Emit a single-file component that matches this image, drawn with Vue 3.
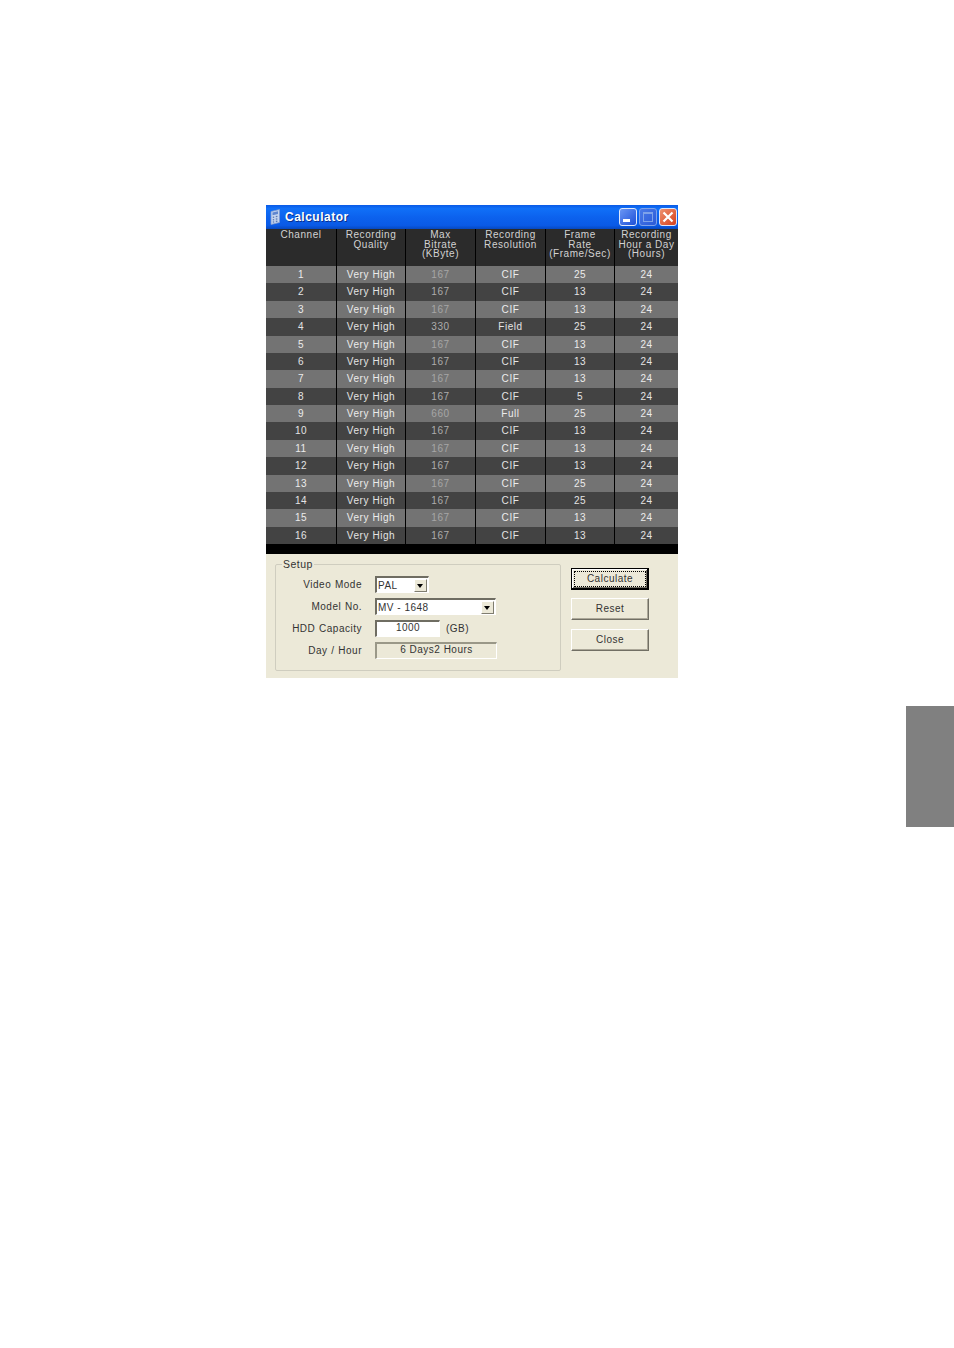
<script setup>
const vals = [
  ['1', '167', 'CIF', '25'], ['2', '167', 'CIF', '13'], ['3', '167', 'CIF', '13'], ['4', '330', 'Field', '25'],
  ['5', '167', 'CIF', '13'], ['6', '167', 'CIF', '13'], ['7', '167', 'CIF', '13'], ['8', '167', 'CIF', '5'],
  ['9', '660', 'Full', '25'], ['10', '167', 'CIF', '13'], ['11', '167', 'CIF', '13'], ['12', '167', 'CIF', '13'],
  ['13', '167', 'CIF', '25'], ['14', '167', 'CIF', '25'], ['15', '167', 'CIF', '13'], ['16', '167', 'CIF', '13'],
]
const rows = vals.map(([ch, rate, res, fps]) => ({ ch, rate, res, fps }))
</script>

<template>
  <div class="page">
    <div class="window">
      <div class="titlebar">
        <svg class="appicon" width="12" height="16" viewBox="0 0 12 16">
          <path d="M1 2.5L9.5 0.5V13.5L1 15.5Z" fill="#c4d4ee" stroke="#7f9bd0" stroke-width="0.8" />
          <path d="M2.5 3.5L8 2.2V5L2.5 6.3Z" fill="#5f86cf" />
          <path d="M2.8 8.4l1.4-.3M5.8 7.7l1.6-.4M2.8 10.9l1.4-.3M5.8 10.2l1.6-.4M2.8 13.2l1.4-.3M5.8 12.5l1.6-.4" stroke="#5a79b6" stroke-width="1.3" />
        </svg>
        <span class="title">Calculator</span>
        <div class="winbtns">
          <span class="wb wb-min"><i class="minbar"></i></span>
          <span class="wb wb-max"><i class="maxbox"></i></span>
          <span class="wb wb-close">
            <svg width="12" height="12" viewBox="0 0 12 12"><path d="M1.5 1.5l9 9M10.5 1.5l-9 9" stroke="#fff" stroke-width="2.2" /></svg>
          </span>
        </div>
      </div>

      <div class="table">
        <div class="row head">
          <div class="cell">Channel</div>
          <div class="cell">Recording<br />Quality</div>
          <div class="cell">Max<br />Bitrate<br />(KByte)</div>
          <div class="cell">Recording<br />Resolution</div>
          <div class="cell">Frame<br />Rate<br />(Frame/Sec)</div>
          <div class="cell">Recording<br />Hour a Day<br />(Hours)</div>
        </div>
        <div v-for="(r, i) in rows" :key="r.ch" class="row body" :class="i % 2 ? 'dark' : 'light'">
          <div class="cell">{{ r.ch }}</div>
          <div class="cell">Very High</div>
          <div class="cell rate">{{ r.rate }}</div>
          <div class="cell">{{ r.res }}</div>
          <div class="cell">{{ r.fps }}</div>
          <div class="cell">24</div>
        </div>
        <div class="tableend"></div>
      </div>

      <div class="bottom">
        <fieldset class="setup">
          <legend>Setup</legend>
          <div class="form">
            <span class="lbl">Video Mode</span>
            <div class="combo combo-s"><span>PAL</span><i class="arrow"></i></div>
            <span class="lbl">Model No.</span>
            <div class="combo combo-l"><span>MV - 1648</span><i class="arrow"></i></div>
            <span class="lbl">HDD Capacity</span>
            <div class="capline"><div class="input">1000</div><span class="unit">(GB)</span></div>
            <span class="lbl">Day / Hour</span>
            <div class="readout">6 Days2 Hours</div>
          </div>
        </fieldset>
        <div class="actions">
          <div class="btn default"><span class="focus">Calculate</span></div>
          <div class="btn">Reset</div>
          <div class="btn">Close</div>
        </div>
      </div>
    </div>
    <div class="tab"></div>
  </div>
</template>

<style scoped>
.page {
  height: 1348px;
  padding-top: 205px;
  box-sizing: border-box;
  background: #fff;
  font-family: "Liberation Sans", Arial, sans-serif;
  font-size: 10px;
  overflow: hidden;
}
.window {
  margin-left: 266px;
  width: 412px;
  height: 473px;
  display: flex;
  flex-direction: column;
  background: #ece9d8;
}
.titlebar {
  height: 24px;
  flex: none;
  display: flex;
  align-items: center;
  padding: 0 1px 0 4px;
  gap: 3px;
  box-sizing: border-box;
  background: linear-gradient(#0a5ae6 0%, #1070f8 15%, #0c62ee 50%, #0a5ae6 85%, #0648c0 100%);
}
.title {
  color: #fff;
  font-size: 12px;
  font-weight: 700;
  letter-spacing: 0.5px;
  text-shadow: 1px 1px 0 #0a2f8c;
}
.winbtns {
  margin-left: auto;
  display: flex;
  gap: 2px;
}
.wb {
  width: 18px;
  height: 18px;
  box-sizing: border-box;
  border: 1px solid #dfe8fb;
  border-radius: 3px;
  display: flex;
  align-items: center;
  justify-content: center;
  position: relative;
}
.wb-min {
  background: linear-gradient(135deg, #6a96f4, #1e50d8);
}
.wb-max {
  background: linear-gradient(135deg, #4a7ae8, #2a5ad8);
  border-color: #7ea2ea;
}
.wb-close {
  background: linear-gradient(135deg, #ee9270, #d6401c);
}
.minbar {
  position: absolute;
  left: 3px;
  bottom: 3px;
  width: 7px;
  height: 3px;
  background: #fff;
}
.maxbox {
  width: 10px;
  height: 10px;
  box-sizing: border-box;
  border: 1px solid #7ea2ea;
  border-top-width: 2px;
}
.table {
  flex: none;
  background: #000;
  color: #e8e8e8;
  display: flex;
  flex-direction: column;
}
.row {
  display: grid;
  grid-template-columns: 71px 69px 70px 70px 69px 63px;
  column-gap: 0;
}
.head {
  height: 37px;
  background: #2b2b2b;
  line-height: 9.5px;
}
.cell {
  text-align: center;
  letter-spacing: 0.55px;
  white-space: nowrap;
  border-right: 1px solid #000;
  overflow: hidden;
}
.cell:last-child {
  border-right: none;
}
.head .cell {
  padding-top: 1px;
  color: #d2d2d2;
}
.body {
  height: 17.375px;
  line-height: 18.6px;
}
.light {
  background: #737373;
  color: #ececec;
}
.dark {
  background: #434343;
  color: #e4e4e4;
}
.light .rate {
  color: #a6a6a6;
}
.dark .rate {
  color: #adadad;
}
.tableend {
  height: 10px;
  background: #000;
}
.bottom {
  flex: 1;
  display: flex;
  align-items: flex-start;
  padding: 5px 0 0 9px;
  color: #333;
}
.setup {
  margin: 0;
  width: 286px;
  height: 112px;
  box-sizing: border-box;
  padding: 0;
  border: 1px solid #cfcdbf;
  border-radius: 2px;
  min-inline-size: 0;
  letter-spacing: 0.5px;
}
.setup legend {
  margin-left: 6px;
  padding: 0 1px;
  font-size: 10.5px;
  line-height: 11px;
}
.form {
  display: grid;
  grid-template-columns: 86px auto;
  column-gap: 13px;
  row-gap: 5px;
  padding-top: 6px;
  align-items: center;
  justify-items: start;
}
.lbl {
  justify-self: end;
  line-height: 17px;
  word-spacing: 0.5px;
}
.combo {
  height: 17px;
  box-sizing: border-box;
  background: #fff;
  border-style: solid;
  border-width: 2px 1px 1px 2px;
  border-color: #6f6d62 #fff #fff #6f6d62;
  display: flex;
  align-items: center;
  justify-content: space-between;
  padding: 0 1px 0 1px;
}
.combo-s {
  width: 54px;
}
.combo-l {
  width: 121px;
}
.arrow {
  width: 13px;
  height: 13px;
  background: #ece9d8;
  border: 1px solid;
  border-color: #fff #7f7d70 #7f7d70 #fff;
  box-sizing: border-box;
  position: relative;
}
.arrow::after {
  content: "";
  position: absolute;
  left: 2px;
  top: 4px;
  border-left: 3.5px solid transparent;
  border-right: 3.5px solid transparent;
  border-top: 4px solid #000;
}
.capline {
  display: flex;
  align-items: center;
  gap: 6px;
}
.input {
  width: 65px;
  height: 17px;
  box-sizing: border-box;
  background: #fff;
  border-style: solid;
  border-width: 2px 1px 1px 2px;
  border-color: #6f6d62 #fff #fff #6f6d62;
  text-align: center;
  line-height: 11px;
}
.readout {
  width: 122px;
  height: 17px;
  box-sizing: border-box;
  border-style: solid;
  border-width: 2px 1px 1px 2px;
  border-color: #9a9888 #fff #fff #9a9888;
  text-align: center;
  line-height: 11px;
}
.actions {
  margin-left: 10px;
  display: flex;
  flex-direction: column;
  gap: 8.4px;
  padding-top: 9px;
}
.btn {
  width: 78px;
  height: 22px;
  box-sizing: border-box;
  background: #ece9d8;
  border: 1px solid;
  border-color: #fff #716f64 #716f64 #fff;
  box-shadow: inset -1px -1px 0 #aca899;
  text-align: center;
  line-height: 19px;
  letter-spacing: 0.5px;
}
.btn.default {
  border-color: #000;
  border-width: 1px 2px 2px 1px;
  box-shadow: inset 1px 1px 0 #fff, inset -1px -1px 0 #716f64;
  padding: 2px 1px 1px 2px;
}
.focus {
  display: block;
  height: 16px;
  box-sizing: border-box;
  border: 1px dotted #000;
  line-height: 13px;
}
.tab {
  width: 48px;
  height: 121px;
  margin: 28px 0 0 906px;
  background: #808080;
}
</style>
